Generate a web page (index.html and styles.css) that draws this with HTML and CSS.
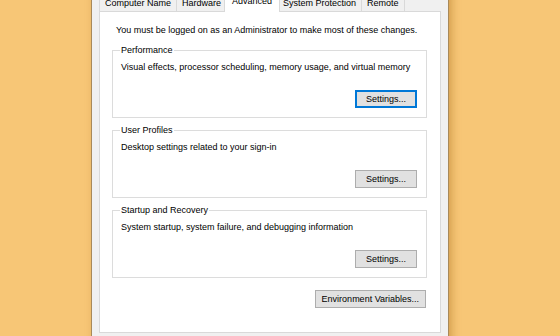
FILE: index.html
```html
<!DOCTYPE html>
<html lang="en">
<head>
  <meta charset="UTF-8">
  <meta name="viewport" content="width=device-width, initial-scale=1.0">
  <title>System Properties</title>
  <link rel="stylesheet" href="styles.css">
</head>
<body>
  <div class="window">
    <!-- tab strip -->
    <div class="tabs">
      <div class="tab">Computer Name</div>
      <div class="tab">Hardware</div>
      <div class="tab active">Advanced</div>
      <div class="tab">System Protection</div>
      <div class="tab">Remote</div>
    </div>

    <!-- Advanced page -->
    <div class="panel">
      <p class="note">You must be logged on as an Administrator to make most of these changes.</p>

      <fieldset class="group">
        <legend>Performance</legend>
        <p class="desc">Visual effects, processor scheduling, memory usage, and virtual memory</p>
        <div class="actions">
          <button class="btn default">Settings...</button>
        </div>
      </fieldset>

      <fieldset class="group">
        <legend>User Profiles</legend>
        <p class="desc">Desktop settings related to your sign-in</p>
        <div class="actions">
          <button class="btn">Settings...</button>
        </div>
      </fieldset>

      <fieldset class="group">
        <legend>Startup and Recovery</legend>
        <p class="desc">System startup, system failure, and debugging information</p>
        <div class="actions">
          <button class="btn">Settings...</button>
        </div>
      </fieldset>

      <div class="env-row">
        <button class="btn">Environment Variables...</button>
      </div>
    </div>
  </div>
</body>
</html>
```

FILE: styles.css
```css
html, body {
  margin: 0;
  padding: 0;
  height: 100%;
  overflow: hidden;
}

body {
  background: #f7c676;
  font-family: 'Liberation Sans', Arial, sans-serif;
  font-size: 9px;
  color: #000;
}

/* dialog window */
.window {
  width: 356px;
  height: 360px;
  margin: -10px 0 0 91px;
  background: #f0f0f0;
  border-left: 1px solid #a8895a;
  border-right: 1px solid #a8895a;
  box-shadow: 3px 0 8px rgba(150, 90, 10, 0.35);
}

/* tab strip */
.tabs {
  display: flex;
  align-items: flex-end;
  height: 21px;
  padding: 0 7px 0 8px;
}

.tab {
  line-height: 15px;
  padding: 3px 5px 0;
  margin-left: -1px;
  border: 1px solid #d9d9d9;
  border-bottom: none;
  background: #f0f0f0;
  white-space: nowrap;
}

.tab.active {
  position: relative;
  z-index: 1;
  background: #fff;
  padding: 3px 7px 3px;
  margin: 0 -2px -1px -3px;
}

/* tab page */
.panel {
  box-sizing: border-box;
  height: 322px;
  margin: 0 7px;
  padding: 12px 13px 0 12px;
  background: #fff;
  border: 1px solid #d9d9d9;
  display: flex;
  flex-direction: column;
  white-space: nowrap;
}

.note {
  margin: 0 0 8px 4px;
  line-height: 12px;
}

/* group boxes */
.group {
  margin: 0 0 6px;
  padding: 0 9px 9px 7px;
  border: 1px solid #dcdcdc;
  min-width: 0;
}

.group legend {
  padding: 0 1px;
  line-height: 12px;
}

.desc {
  margin: 5px 0 0 1px;
  line-height: 12px;
}

.actions {
  display: flex;
  justify-content: flex-end;
  margin-top: 17px;
}

/* buttons */
.btn {
  box-sizing: border-box;
  height: 18px;
  min-width: 62px;
  padding: 0 6px;
  font: inherit;
  color: #000;
  background: #e1e1e1;
  border: 1px solid #adadad;
  border-radius: 0;
}

.btn.default {
  border-color: #0078d7;
  box-shadow: inset 0 0 0 1px #0078d7;
}

.env-row {
  display: flex;
  justify-content: flex-end;
  margin: 6px 1px 0 0;
}
```
